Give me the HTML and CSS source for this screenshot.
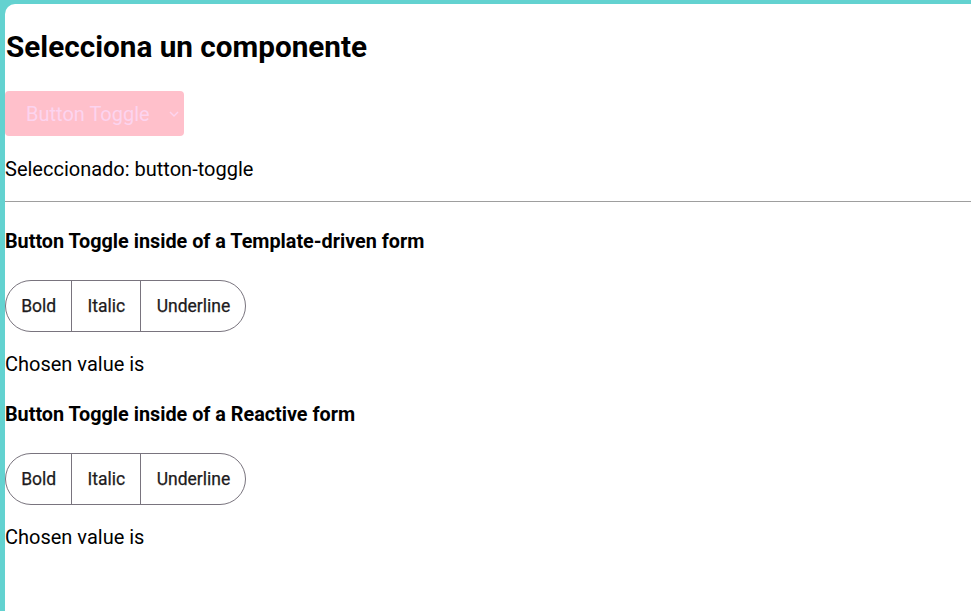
FILE: index.html
```html
<!DOCTYPE html>
<html lang="es">
<head>
<meta charset="utf-8">
<title>Selecciona un componente</title>
<link rel="stylesheet" href="styles.css">
</head>
<body>
<div class="panel">
  <h1 class="title">Selecciona un componente</h1>
  <div class="select">
    <span class="select-text">Button Toggle</span>
    <svg class="chev" width="10" height="6" viewBox="0 0 10 6"><path d="M1 1 L5 5 L9 1" fill="none" stroke="currentColor" stroke-width="1.4"/></svg>
  </div>
  <p class="selected">Seleccionado: button-toggle</p>
  <hr class="sep">
  <h3 class="sub">Button Toggle inside of a Template-driven form</h3>
  <div class="toggle-group">
    <button class="tbtn">Bold</button>
    <button class="tbtn">Italic</button>
    <button class="tbtn">Underline</button>
  </div>
  <p class="chosen">Chosen value is</p>
  <h3 class="sub">Button Toggle inside of a Reactive form</h3>
  <div class="toggle-group">
    <button class="tbtn">Bold</button>
    <button class="tbtn">Italic</button>
    <button class="tbtn">Underline</button>
  </div>
  <p class="chosen">Chosen value is</p>
</div>
</body>
</html>
```
FILE: styles.css
```css
html, body {
  margin: 0;
  padding: 0;
  height: 100%;
}
body {
  background: #63d2d0;
  font-family: Roboto, "Liberation Sans", sans-serif;
  color: #000;
  padding: 4px 0 0 5px;
  box-sizing: border-box;
}
.panel {
  background: #fff;
  border-top-left-radius: 10px;
  min-height: 100%;
  padding-top: 1px;
  box-sizing: border-box;
}
.title {
  font-size: 29.7px;
  font-weight: 700;
  margin: 26px 0 0 1px;
  line-height: 32px;
}
.select {
  margin-top: 28px;
  width: 179px;
  height: 45px;
  background: #ffc0cb;
  border-radius: 4px;
  display: flex;
  align-items: center;
  box-sizing: border-box;
  padding: 0 5px 0 21px;
  color: #fcd4ef;
}
.select-text {
  font-size: 20px;
  font-weight: 400;
  flex: 1;
}
.chev {
  color: #fcd4ef;
}
.selected {
  font-size: 20px;
  margin: 22px 0 0 0;
  line-height: 22px;
}
.sep {
  margin: 21px 0 0 0;
  border: 0;
  border-top: 1px solid #9e9e9e;
}
.sub {
  font-size: 19.8px;
  font-weight: 700;
  margin: 29px 0 0 0;
  line-height: 22px;
}
.sub + .toggle-group {
  margin-top: 27px;
}
.toggle-group {
  display: inline-flex;
  border: 1px solid #79747e;
  border-radius: 26px;
  height: 52px;
  box-sizing: border-box;
  overflow: hidden;
  vertical-align: top;
}
.tbtn {
  font-family: Roboto, "Liberation Sans", sans-serif;
  font-size: 17.5px;
  font-weight: 400;
  color: #1d1b20;
  background: transparent;
  border: 0;
  border-left: 1px solid #79747e;
  padding: 0 15.2px;
  -webkit-text-stroke: 0.25px #1d1b20;
}
.tbtn:first-child {
  border-left: 0;
}
.chosen {
  font-size: 20px;
  margin: 20px 0 0 0;
  line-height: 24px;
}
.chosen + .sub {
  margin-top: 28px;
}
```
